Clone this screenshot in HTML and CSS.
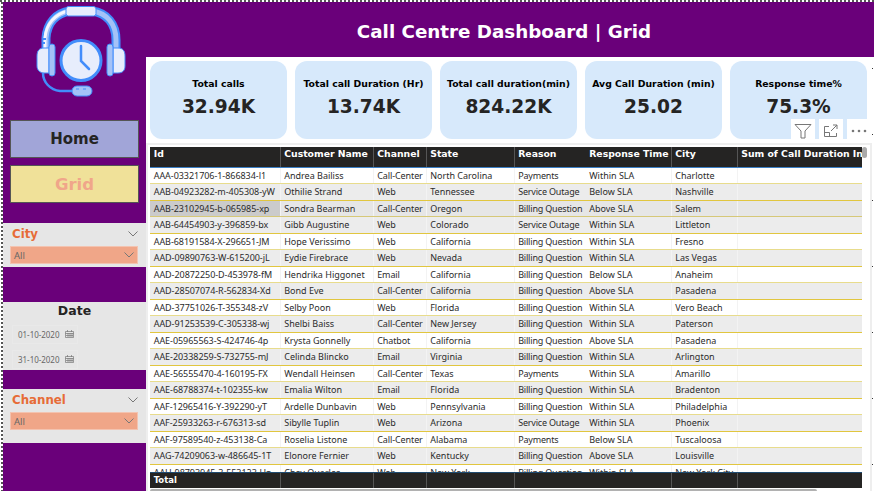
FILE: index.html
```html
<!DOCTYPE html>
<html lang="en">
<head>
<meta charset="utf-8">
<title>Call Centre Dashboard</title>
<link rel="stylesheet" href="styles.css">
</head>
<body>
<div class="page">
  <aside class="side">
    <div class="logo">
      <svg width="94" height="94" viewBox="0 0 94 94" fill="none" stroke="#428dfb" stroke-width="2">
        <path d="M12 44V33C13 18 22 8 36 6h22c15 2 24 13 24 29v9" stroke-width="9"/>
        <path d="M12 44V33C13 18 22 8 36 6h22c15 2 24 13 24 29v9" stroke="#a4c2f7" stroke-width="5"/>
        <path d="M11 44V33C12 19 21 9 34 6" stroke="#f4f7fe" stroke-width="3"/>
        <path d="M8 34h4M8 38h3" stroke-width="2"/>
        <rect x="32" y="1.500" width="30" height="9.500" rx="2.500" fill="#e7edfc"/>
        <path d="M9 68c0 9 7 17 17 18h13" stroke-width="2.500"/>
        <rect x="38" y="81" width="20" height="10" rx="5" fill="#a4c2f7"/>
        <path d="M42 84h3m4 0h3"/>
        <path d="M15 43H10c-5 0-7 3-7 8v10c0 4 3 7 7 7h5z" fill="#e7edfc"/>
        <rect x="15" y="39" width="6" height="32" rx="3" fill="#a4c2f7"/>
        <path d="M79 43h5c5 0 7 3 7 8v10c0 4-2 7-7 7h-5z" fill="#e7edfc"/>
        <rect x="73" y="39" width="6" height="32" rx="3" fill="#a4c2f7"/>
        <circle cx="47" cy="55.500" r="20" fill="#e7edfc" stroke-width="3"/>
        <path d="M47 41v15l8 8" stroke-width="2.500" stroke-linecap="round"/>
      </svg>
    </div>
    <div class="nav home"><span>Home</span></div>
    <div class="nav grid"><span>Grid</span></div>
    <section class="slicer city">
      <div class="slicer-head"><b>City</b><svg width="10" height="6"><path d="M.5.500 5 5 9.500.5"/></svg></div>
      <div class="select"><span>All</span><svg width="10" height="6"><path d="M.5.500 5 5 9.500.5"/></svg></div>
    </section>
    <section class="slicer date">
      <h2>Date</h2>
      <div class="day"><span>01-10-2020</span><svg width="9" height="9"><path d="M.5 1.500h8v6h-8zM.5 3.500h8M3 3v4M5 3v4M7 3v4M1 5.500h7M2.500 0v2M6.500 0v2"/></svg></div>
      <div class="day"><span>31-10-2020</span><svg width="9" height="9"><path d="M.5 1.500h8v6h-8zM.5 3.500h8M3 3v4M5 3v4M7 3v4M1 5.500h7M2.500 0v2M6.500 0v2"/></svg></div>
    </section>
    <section class="slicer channel">
      <div class="slicer-head"><b>Channel</b><svg width="10" height="6"><path d="M.5.500 5 5 9.500.5"/></svg></div>
      <div class="select"><span>All</span><svg width="10" height="6"><path d="M.5.500 5 5 9.500.5"/></svg></div>
    </section>
  </aside>
  <main class="main">
    <header><h1>Call Centre Dashboard | Grid</h1></header>
    <div class="cards">
      <div class="card"><h3>Total calls</h3><p>32.94K</p></div>
      <div class="card"><h3>Total call Duration (Hr)</h3><p>13.74K</p></div>
      <div class="card"><h3>Total call duration(min)</h3><p>824.22K</p></div>
      <div class="card"><h3>Avg Call Duration (min)</h3><p>25.02</p></div>
      <div class="card"><h3>Response time%</h3><p>75.3%</p></div>
    </div>
    <div class="visual">
      <div class="tools">
        <i><svg width="18" height="16"><path d="M1 1.500h16L11 8v7H7V8z"/></svg></i>
        <i><svg width="16" height="14"><path d="M6 2.500H1.500v10h12V9M1.500 8.500h5v4M8 7l6-6M10 1h4v4"/></svg></i>
        <i><svg width="16" height="4" class="dots"><circle cx="2" cy="2" r="1.300"/><circle cx="8" cy="2" r="1.300"/><circle cx="14" cy="2" r="1.300"/></svg></i>
      </div>
      <div class="table">
        <div class="row head"><span>Id</span><span>Customer Name</span><span>Channel</span><span>State</span><span>Reason</span><span>Response Time</span><span>City</span><span>Sum of Call Duration In</span></div>
        <div class="rows" id="rows"></div>
        <div class="row total"><span>Total</span><span></span><span></span><span></span><span></span><span></span><span></span><span></span></div>
        <div class="hscroll"></div>
      </div>
      <div class="vscroll"></div>
    </div>
  </main>
  <div class="marks"><i></i><i></i><i></i><i></i><i></i><i></i><i></i></div>
</div>
<script src="rows.js"></script>
</body>
</html>
```
FILE: styles.css
```css
* { box-sizing: border-box; }
body { margin: 0; width: 874px; height: 491px; overflow: hidden; background: #fff; font-family: "Noto Sans", sans-serif; color: #252423; }
h1, h2, h3, p { margin: 0; white-space: nowrap; }
h1, h2, h3, b, p, .nav, .head, .total { font-family: "DejaVu Sans", sans-serif; font-weight: bold; }
svg { display: block; fill: none; stroke: #777; stroke-width: 1; }
.page { position: relative; display: flex; height: 491px; padding: 2px 0 0 3px; }
.page::before { content: ""; position: absolute; left: 0; top: 0; width: 874px; height: 2px; background: repeating-linear-gradient(90deg, #555 0 2px, #fff 2px 4px); }
.page::after { content: ""; position: absolute; left: 1px; top: 2px; width: 2px; height: 489px; background: repeating-linear-gradient(#555 0 2px, #fff 2px 4px); }
.side { width: 143px; background: #6a007a; display: flex; flex-direction: column; flex: none; }
.logo { height: 118px; flex: none; padding: 3px 0 0 31px; }
.logo svg { stroke: #428dfb; }
.nav { width: 129px; height: 38px; flex: none; margin-left: 7px; border: 1px solid #555; display: flex; align-items: center; justify-content: center; font-size: 15px; }
.home { background: #a1a5d8; }
.grid { background: #f0e199; color: #f0a68a; font-size: 16.5px; margin-top: 7px; }
.slicer { background: #e6e6e6; flex: none; }
.city { margin-top: 20px; height: 44px; }
.slicer-head { display: flex; justify-content: space-between; align-items: center; height: 21px; padding: 0 8px 0 9px; color: #e66c37; }
.slicer-head b { font-size: 11.8px; }
.select { margin: 2px 8px 0 7px; height: 18px; border: 1px solid #f3c3b0; background: #f0a688; display: flex; justify-content: space-between; align-items: center; padding: 0 3px; font-size: 9.5px; color: #666; }
.date { margin-top: 35px; height: 68px; }
.date h2 { font-size: 12.5px; line-height: 17px; text-align: center; }
.day { display: flex; align-items: center; gap: 6px; width: 66px; height: 19px; margin: 6px 0 6px 9px; padding-left: 5px; font-size: 8px; color: #666; border: 1px solid #e9e9e9; }
.day span { letter-spacing: -0.03px; }
.day + .day { margin-top: 0; }
.day svg { flex: none; stroke-width: .7; }
.channel { margin-top: 19px; height: 54px; }
.main { width: 728px; display: flex; flex-direction: column; flex: none; }
header { height: 55px; flex: none; background: #6a007a; display: flex; align-items: center; justify-content: center; padding: 4px 12px 0 0; }
h1 { color: #fff; font-size: 18.3px; }
.cards { display: flex; gap: 8px; padding: 4px 0 0 4px; height: 82px; flex: none; }
.card { width: 137px; height: 78px; border-radius: 12px; background: #d7e9fb; text-align: center; flex: none; }
.card h3 { margin-top: 16px; line-height: 13px; font-size: 9.3px; color: #000; display: flex; justify-content: center; }
.card p { font-size: 18.6px; line-height: 22px; margin-top: 6px; }
.visual { position: relative; display: flex; margin-top: 4px; width: 726px; height: 348px; border: 2px solid #eee; border-bottom: 0; padding: 2px 0 0 2px; flex: none; }
.tools { position: absolute; left: 643px; top: -26px; display: flex; gap: 4px; }
.tools i { width: 24px; height: 20px; background: #fff; display: flex; align-items: center; justify-content: center; padding-top: 4px; }
.tools .dots { fill: #777; stroke: none; }
.table { width: 712px; flex: none; }
.row { display: grid; grid-template-columns: 130.5px 93px 53px 88px 71px 86px 66px 124.5px; height: 16px; }
.row span { padding-left: 3.7px; white-space: nowrap; overflow: hidden; font-size: 9px; line-height: 15px; border-right: 1px solid #f3f3f3; }
.row span:nth-child(5), .row span:nth-child(8) { border-right: 0; }
.head { height: 21px; background: #252423; border-bottom: 1px solid #3b7fc4; }
.head span { color: #fff; font-size: 9.3px; line-height: 14px; border-right-color: #555; }
.rows { height: 304px; overflow: hidden; }
.rows .row { border-bottom: 1px solid #e8dc8c; color: #2b2b2b; }
.rows .row:nth-child(even) { height: 17px; background: #ececec; border-bottom-color: #e1c63f; }
.rows .row:nth-child(even) span { line-height: 16px; }
.rows .row:nth-child(3) { background: #e6e6e6; border-bottom-color: #d6c878; }
.rows .row:nth-child(3) span:first-child { background: #cbcbcb; }
.rows span:nth-child(1) { letter-spacing: -0.05px; }
.rows span:nth-child(3) { letter-spacing: -0.1px; }
.rows span:nth-child(5) { letter-spacing: -0.19px; }
.total { height: 16px; background: #252423; border-top: 1px solid #204b70; }
.total span { color: #fff; font-size: 8.500px; line-height: 14px; border-right-color: #555; }
.hscroll { width: 667px; height: 4px; background: #b1b1b1; margin-top: 1px; border-radius: 2px 2px 0 0; }
.vscroll { width: 5px; height: 11px; border-radius: 3px; background: #aaa; }
.marks { position: absolute; right: 1px; top: 68px; display: flex; flex-direction: column; gap: 65px; }
.marks i { width: 1px; height: 1px; background: #333; }
```
FILE: rows.js
```js
const rows = `AAA-03321706-1-866834-l1|Andrea Bailiss|Call-Center|North Carolina|Payments|Within SLA|Charlotte
AAB-04923282-m-405308-yW|Othilie Strand|Web|Tennessee|Service Outage|Below SLA|Nashville
AAB-23102945-b-065985-xp|Sondra Bearman|Call-Center|Oregon|Billing Question|Above SLA|Salem
AAB-64454903-y-396859-bx|Gibb Augustine|Web|Colorado|Service Outage|Within SLA|Littleton
AAB-68191584-X-296651-JM|Hope Verissimo|Web|California|Billing Question|Within SLA|Fresno
AAD-09890763-W-615200-jL|Eydie Firebrace|Web|Nevada|Billing Question|Within SLA|Las Vegas
AAD-20872250-D-453978-fM|Hendrika Higgonet|Email|California|Billing Question|Below SLA|Anaheim
AAD-28507074-R-562834-Xd|Bond Eve|Call-Center|California|Billing Question|Above SLA|Pasadena
AAD-37751026-T-355348-zV|Selby Poon|Web|Florida|Billing Question|Within SLA|Vero Beach
AAD-91253539-C-305338-wj|Shelbi Baiss|Call-Center|New Jersey|Billing Question|Within SLA|Paterson
AAE-05965563-S-424746-4p|Krysta Gonnelly|Chatbot|California|Billing Question|Above SLA|Pasadena
AAE-20338259-S-732755-mJ|Celinda Blincko|Email|Virginia|Billing Question|Within SLA|Arlington
AAE-56555470-4-160195-FX|Wendall Heinsen|Call-Center|Texas|Payments|Within SLA|Amarillo
AAE-68788374-t-102355-kw|Emalia Wilton|Email|Florida|Billing Question|Within SLA|Bradenton
AAF-12965416-Y-392290-yT|Ardelle Dunbavin|Web|Pennsylvania|Billing Question|Within SLA|Philadelphia
AAF-25933263-r-676313-sd|Sibylle Tuplin|Web|Arizona|Service Outage|Within SLA|Phoenix
AAF-97589540-z-453138-Ca|Roselia Listone|Call-Center|Alabama|Payments|Below SLA|Tuscaloosa
AAG-74209063-w-486645-1T|Elonore Fernier|Web|Kentucky|Billing Question|Above SLA|Louisville
AAH-98793945-3-553123-Un|Chev Quarles|Web|New York|Billing Question|Within SLA|New York City`.split("\n");

const body = document.getElementById("rows");
rows.forEach(line => {
  const row = document.createElement("div");
  row.className = "row";
  [...line.split("|"), ""].forEach(text => {
    const cell = document.createElement("span");
    cell.textContent = text;
    row.append(cell);
  });
  body.append(row);
});
```
